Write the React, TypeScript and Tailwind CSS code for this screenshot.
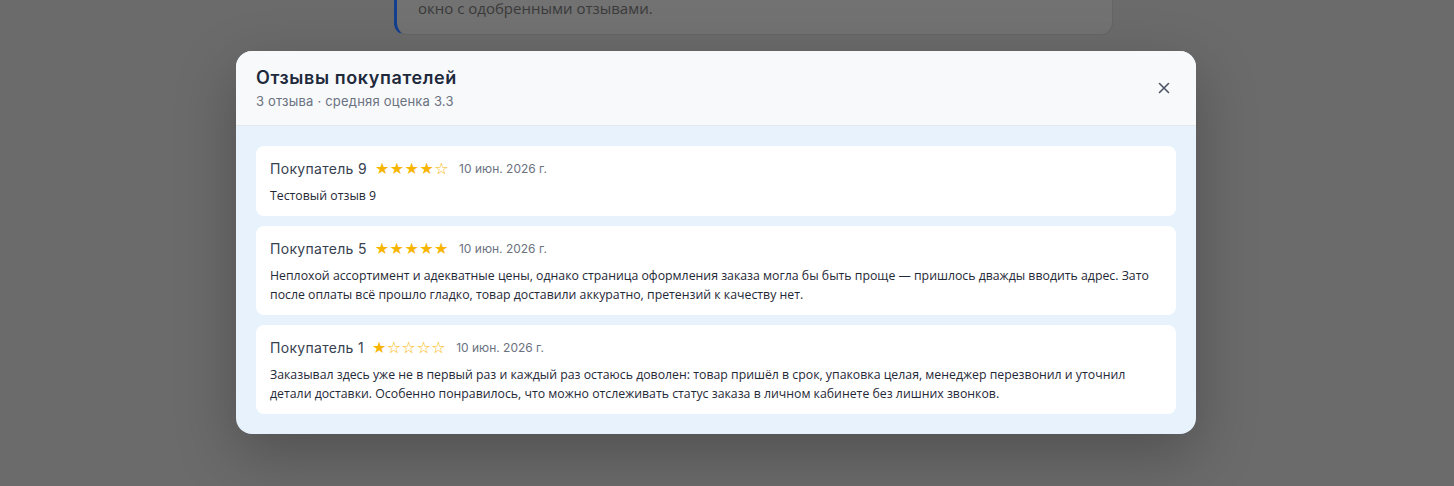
import React from 'react';

type Review = {
  author: string;
  rating: number;
  date: string;
  text: string;
};

const reviews: Review[] = [
  { author: 'Покупатель 9', rating: 4, date: '10 июн. 2026 г.', text: 'Тестовый отзыв 9' },
  {
    author: 'Покупатель 5',
    rating: 5,
    date: '10 июн. 2026 г.',
    text: 'Неплохой ассортимент и адекватные цены, однако страница оформления заказа могла бы быть проще — пришлось дважды вводить адрес. Зато после оплаты всё прошло гладко, товар доставили аккуратно, претензий к качеству нет.',
  },
  {
    author: 'Покупатель 1',
    rating: 1,
    date: '10 июн. 2026 г.',
    text: 'Заказывал здесь уже не в первый раз и каждый раз остаюсь доволен: товар пришёл в срок, упаковка целая, менеджер перезвонил и уточнил детали доставки. Особенно понравилось, что можно отслеживать статус заказа в личном кабинете без лишних звонков.',
  },
];

const heading = { fontFamily: 'Inter, "Noto Sans", sans-serif' };
const body = { fontFamily: '"Open Sans", "Noto Sans", sans-serif' };

const Stars: React.FC<{ value: number }> = ({ value }) => (
  <span className="text-[16px] leading-none tracking-[0.5px] text-[#f7b500]" style={{ fontFamily: '"DejaVu Sans", sans-serif' }}>
    {[1, 2, 3, 4, 5].map((i) => (i <= value ? '★' : '☆')).join('')}
  </span>
);

const ReviewCard: React.FC<{ review: Review }> = ({ review }) => (
  <div className="rounded-lg bg-white px-[14px] pt-[13px] pb-[11px]">
    <div className="flex h-[20px] items-center gap-2">
      <span className="text-[14px] tracking-[0.3px] text-[#374151]" style={heading}>{review.author}</span>
      <Stars value={review.rating} />
      <span className="ml-[2px] text-[12px] text-[#6b7280]" style={heading}>{review.date}</span>
    </div>
    <p className="mt-[7px] text-[12.3px] leading-[19px] text-[#1f2937]" style={body}>
      {review.text}
    </p>
  </div>
);

export default function App() {
  return (
    <div className="relative h-[486px] w-full overflow-hidden bg-[#6b6b6b]">
      <div className="ml-[394px] mt-[-27px] w-[719px] rounded-xl border border-[#656565] border-l-[3px] border-l-[#123f8f] bg-[#727272] pl-[21px] pt-[26px] pb-[18px]">
        <p className="text-[15px] leading-[16px] text-[#3a3a3a]" style={body}>окно с одобренными отзывами.</p>
      </div>

      <div className="ml-[236px] mt-[16px] w-[960px] overflow-hidden rounded-2xl bg-[#e7f2fc] shadow-[0_20px_60px_rgba(0,0,0,0.25)]">
        <div className="flex items-start justify-between border-b border-[#e3e8ee] bg-[#f7f9fb] px-5 pt-[16px] pb-[13px]">
          <div>
            <h2 className="text-[18px] font-semibold leading-[22px] tracking-[0.6px] text-[#1e293b]" style={heading}>Отзывы покупателей</h2>
            <p className="mt-[3px] text-[13px] tracking-[0.2px] text-[#6b7280]" style={heading}>3 отзыва · средняя оценка 3.3</p>
          </div>
          <button className="mt-[15px] mr-[6px] text-[#4b5563]">
            <svg width="12" height="12" viewBox="0 0 12 12" fill="none" stroke="currentColor" strokeWidth="1.6" strokeLinecap="round">
              <path d="M1.5 1.5l9 9M10.5 1.5l-9 9" />
            </svg>
          </button>
        </div>
        <div className="flex flex-col gap-[10px] px-5 pt-5 pb-[20px]">
          {reviews.map((r) => (
            <ReviewCard key={r.author} review={r} />
          ))}
        </div>
      </div>
    </div>
  );
}
